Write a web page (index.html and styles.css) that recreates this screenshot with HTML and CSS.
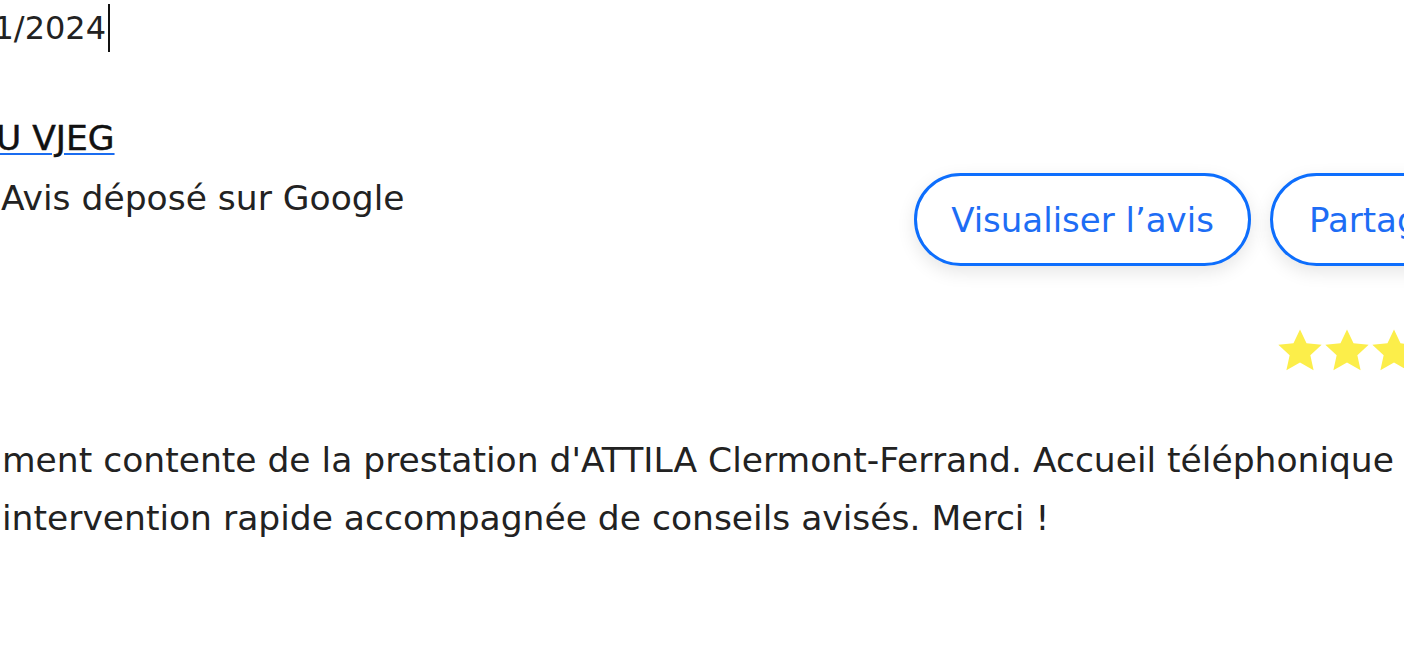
FILE: index.html
```html
<!DOCTYPE html>
<html lang="fr">
<head>
<meta charset="utf-8">
<link rel="stylesheet" href="styles.css">
</head>
<body>
<div class="review">
  <div class="date"><span class="date-text">1/2024</span><span class="caret"></span></div>
  <div class="head">
    <div class="author">
      <a class="name" href="#">U VJEG</a>
      <div class="source">Avis déposé sur Google</div>
    </div>
    <div class="actions">
      <button class="btn btn-view">Visualiser l’avis</button>
      <button class="btn">Partager</button>
    </div>
  </div>
  <div class="stars">
    <svg viewBox="0 0 24 24" class="star"><path d="M12 0.8l3.4 7.2 7.9.8-5.9 5.4 1.7 7.8L12 18l-7.1 4 1.7-7.8L0.7 8.8l7.9-.8z"/></svg>
    <svg viewBox="0 0 24 24" class="star"><path d="M12 0.8l3.4 7.2 7.9.8-5.9 5.4 1.7 7.8L12 18l-7.1 4 1.7-7.8L0.7 8.8l7.9-.8z"/></svg>
    <svg viewBox="0 0 24 24" class="star"><path d="M12 0.8l3.4 7.2 7.9.8-5.9 5.4 1.7 7.8L12 18l-7.1 4 1.7-7.8L0.7 8.8l7.9-.8z"/></svg>
    <svg viewBox="0 0 24 24" class="star"><path d="M12 0.8l3.4 7.2 7.9.8-5.9 5.4 1.7 7.8L12 18l-7.1 4 1.7-7.8L0.7 8.8l7.9-.8z"/></svg>
    <svg viewBox="0 0 24 24" class="star"><path d="M12 0.8l3.4 7.2 7.9.8-5.9 5.4 1.7 7.8L12 18l-7.1 4 1.7-7.8L0.7 8.8l7.9-.8z"/></svg>
  </div>
  <p class="text">ment contente de la prestation d'ATTILA Clermont-Ferrand. Accueil téléphonique et prise de rendez-vous efficaces,<br>intervention rapide accompagnée de conseils avisés. Merci !</p>
</div>
</body>
</html>
```

FILE: styles.css
```css
html, body {
  margin: 0;
  padding: 0;
  background: #fff;
  overflow: hidden;
}
body {
  width: 1404px;
  height: 656px;
  font-family: "DejaVu Sans", "Liberation Sans", sans-serif;
  color: #222;
}
.review {
  width: 2000px;
  margin-left: -4px;
}
.date {
  display: flex;
  align-items: center;
  height: 54px;
  padding-top: 2px;
  box-sizing: border-box;
  margin-left: -2.5px;
  font-size: 32px;
  line-height: 40px;
}
.caret {
  display: inline-block;
  width: 1.5px;
  height: 48px;
  background: #111;
  margin-left: 2px;
}
.head {
  display: flex;
  align-items: flex-start;
  padding-top: 64px;
}
.author {
  width: 918px;
}
.name {
  display: inline-block;
  font-size: 34.5px;
  line-height: 40px;
  color: #111;
  -webkit-text-stroke: 0.5px #111;
  text-decoration: underline;
  text-decoration-color: #1a6cf0;
  text-decoration-thickness: 2px;
  text-underline-offset: 3px;
}
.source {
  margin-top: 20px;
  font-size: 34.5px;
  line-height: 40px;
  padding-left: 5px;
}
.actions {
  display: flex;
  gap: 19px;
  padding-top: 55px;
}
.btn {
  height: 93px;
  padding: 0 36px;
  border: 3px solid #0d6efd;
  border-radius: 47px;
  background: #fff;
  color: #1d6df5;
  font-family: inherit;
  font-size: 34px;
  white-space: nowrap;
  box-shadow: 0 6px 18px rgba(0,0,0,0.10);
}
.btn-view {
  width: 337px;
  padding: 0;
}
.stars {
  display: flex;
  gap: 1px;
  padding-top: 62px;
  padding-left: 1281px;
}
.star {
  width: 46px;
  height: 46px;
  fill: #fcee4a;
}
.text {
  margin: 57px 0 0 6px;
  width: 2000px;
  font-size: 34.5px;
  line-height: 58px;
}
```
